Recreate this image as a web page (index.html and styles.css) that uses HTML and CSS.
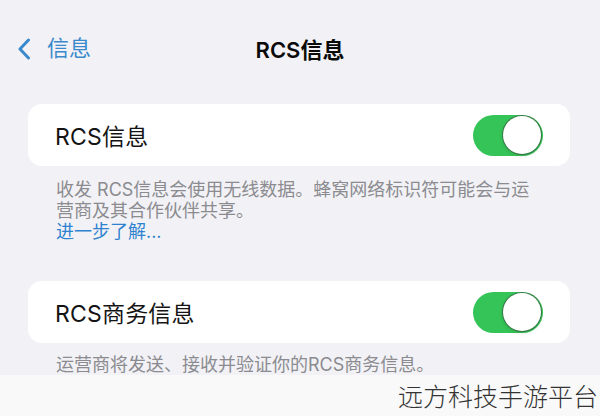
FILE: index.html
```html
<!DOCTYPE html>
<html lang="zh-CN">
<head>
<meta charset="utf-8">
<title>RCS信息</title>
<link rel="stylesheet" href="styles.css">
</head>
<body>
<div class="screen">
  <header class="nav">
    <a class="back" href="#">
      <svg class="chev" width="14" height="22" viewBox="0 0 14 22" aria-hidden="true">
        <path d="M11.5 2 L3 11 L11.5 20" fill="none" stroke="currentColor" stroke-width="3" stroke-linecap="round" stroke-linejoin="round"/>
      </svg>
      <span>信息</span>
    </a>
    <h1 class="title">RCS信息</h1>
  </header>

  <section class="group">
    <div class="card">
      <span class="label">RCS信息</span>
      <span class="toggle"><span class="knob"></span></span>
    </div>
    <p class="note">收发 RCS信息会使用无线数据。蜂窝网络标识符可能会与运<br>营商及其合作伙伴共享。<br><a class="more" href="#">进一步了解...</a></p>
  </section>

  <section class="group second">
    <div class="card">
      <span class="label">RCS商务信息</span>
      <span class="toggle"><span class="knob"></span></span>
    </div>
    <p class="note tight">运营商将发送、接收并验证你的RCS商务信息。</p>
  </section>

  <footer class="band">远方科技手游平台</footer>
</div>
</body>
</html>
```

FILE: styles.css
```css
* { box-sizing: border-box; }
html, body { margin: 0; padding: 0; }
body {
  background: #f2f2f6;
  font-family: Inter, "Noto Sans CJK SC", sans-serif;
  width: 600px;
  height: 416px;
  overflow: hidden;
}
.screen {
  display: flex;
  flex-direction: column;
  height: 416px;
}
.screen > * { flex-shrink: 0; }
.nav {
  position: relative;
  height: 96px;
  display: flex;
  align-items: center;
  padding-left: 17px;
}
.back {
  display: flex;
  align-items: center;
  gap: 16px;
  color: #3a89cc;
  text-decoration: none;
  font-size: 22px;
  line-height: 1;
}
.chev { display: block; margin-top: 1px; }
.title {
  position: absolute;
  left: 0;
  right: 0;
  top: 0;
  height: 96px;
  margin: 0;
  display: flex;
  align-items: center;
  justify-content: center;
  font-size: 22px;
  font-weight: 600;
  color: #0a0a0a;
  pointer-events: none;
}
.group {
  padding: 8px 30px 0 28px;
}
.group.second { padding-top: 39px; }
.card {
  height: 62px;
  background: #ffffff;
  border-radius: 14px;
  display: flex;
  align-items: center;
  justify-content: space-between;
  padding: 0 27px 0 27px;
}
.label {
  font-size: 23px;
  color: #141414;
  letter-spacing: 0.2px;
}
.toggle {
  width: 70px;
  height: 41px;
  border-radius: 21px;
  background: #34c457;
  display: flex;
  align-items: center;
  justify-content: flex-end;
  padding-right: 2px;
}
.knob {
  width: 38px;
  height: 38px;
  border-radius: 50%;
  background: #ffffff;
  box-shadow: 0 0 0 1px rgba(60, 60, 60, 0.5), 0 2px 4px rgba(0, 0, 0, 0.12);
}
.note {
  margin: 0;
  padding: 13px 28px 0 28px;
  font-size: 18px;
  line-height: 21px;
  color: #8b8b90;
}
.note.tight { padding-top: 11px; }
.more {
  color: #2f82cf;
  text-decoration: none;
}
.band {
  margin-top: auto;
  height: 41px;
  background: #f9f9f9;
  display: flex;
  align-items: center;
  justify-content: flex-end;
  padding-right: 2px;
  font-family: "Noto Sans CJK SC", sans-serif;
  font-size: 25px;
  font-weight: 300;
  color: #333333;
  line-height: 1;
}
```
